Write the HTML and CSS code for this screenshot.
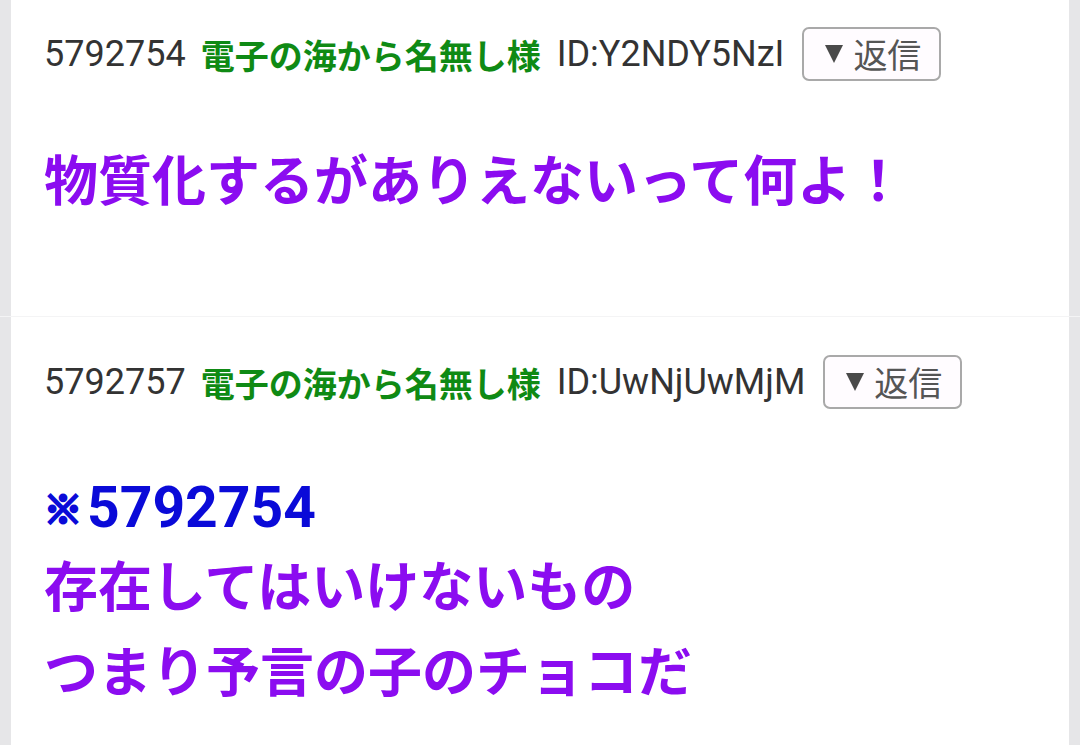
FILE: index.html
```html
<!DOCTYPE html>
<html>
<head>
    <meta charset="utf-8">
    <title>スレッド</title>
    <link rel="stylesheet" href="styles.css">
</head>
<body>
    <div class="thread">
        <div class="post">
            <div class="post-inner">
                <div class="post-head">
                    <span class="res-no">5792754</span>
                    <span class="res-name">電子の海から名無し様</span>
                    <span class="res-id">ID:Y2NDY5NzI</span>
                    <button class="reply-btn"><svg class="tri" width="18" height="18" viewBox="0 0 16 16"><polygon points="0,0 16,0 8,16" fill="#4a4a4a"/></svg>返信</button>
                </div>
                <div class="post-body">
                    <div class="line">物質化するがありえないって何よ！</div>
                </div>
            </div>
        </div>

        <div class="post">
            <div class="post-inner">
                <div class="post-head">
                    <span class="res-no">5792757</span>
                    <span class="res-name">電子の海から名無し様</span>
                    <span class="res-id">ID:UwNjUwMjM</span>
                    <button class="reply-btn"><svg class="tri" width="18" height="18" viewBox="0 0 16 16"><polygon points="0,0 16,0 8,16" fill="#4a4a4a"/></svg>返信</button>
                </div>
                <div class="post-body">
                    <div class="line anchor-line"><a class="anchor" href="#"><span class="kome">※</span>5792754</a></div>
                    <div class="line">存在してはいけないもの</div>
                    <div class="line">つまり予言の子のチョコだ</div>
                </div>
            </div>
        </div>
    </div>
</body>
</html>
```

FILE: styles.css
```css
body {
    margin: 0;
    background-color: #e6e6e8;
    font-family: Roboto, "Noto Sans CJK JP", sans-serif;
    overflow: hidden;
}

.thread {
    margin-top: -11px;
}

.post {
    border-bottom: 1px solid #f4f4f5;
}

.post-inner {
    margin: 0 11px;
    background-color: #ffffff;
    padding: 38px 33px 91px;
}

.post-head {
    display: flex;
    align-items: center;
    height: 54px;
    font-size: 36px;
    color: #333333;
}

.res-no {
    margin-right: 15px;
}

.res-name {
    font-size: 34px;
    font-weight: bold;
    color: #0f8a14;
    margin-right: 16px;
}

.res-id {
    margin-right: 18px;
}

.reply-btn {
    display: flex;
    align-items: center;
    height: 54px;
    padding: 0 18px 0 21px;
    border: 2px solid #a9a9a9;
    border-radius: 7px;
    background-color: #fffcff;
    color: #555555;
    font-family: "Noto Sans CJK JP", sans-serif;
    font-size: 34px;
    line-height: 1;
}

.tri {
    margin-right: 10px;
}

.post-body {
    margin-top: 59px;
    font-family: Roboto, "Noto Sans CJK JP", sans-serif;
    font-size: 54px;
    font-weight: bold;
    color: #8b0cf0;
}

.line {
    height: 85px;
    line-height: 85px;
    white-space: nowrap;
}

.anchor-line {
    height: 78px;
    line-height: 78px;
}

.anchor {
    color: #0a0ad8;
    text-decoration: none;
    font-size: 57px;
}

.kome {
    font-family: "Noto Sans CJK JP", sans-serif;
    font-weight: 900;
    font-size: 38px;
    -webkit-text-stroke: 3px #0a0ad8;
    vertical-align: 4px;
    margin-right: 5px;
}
```
